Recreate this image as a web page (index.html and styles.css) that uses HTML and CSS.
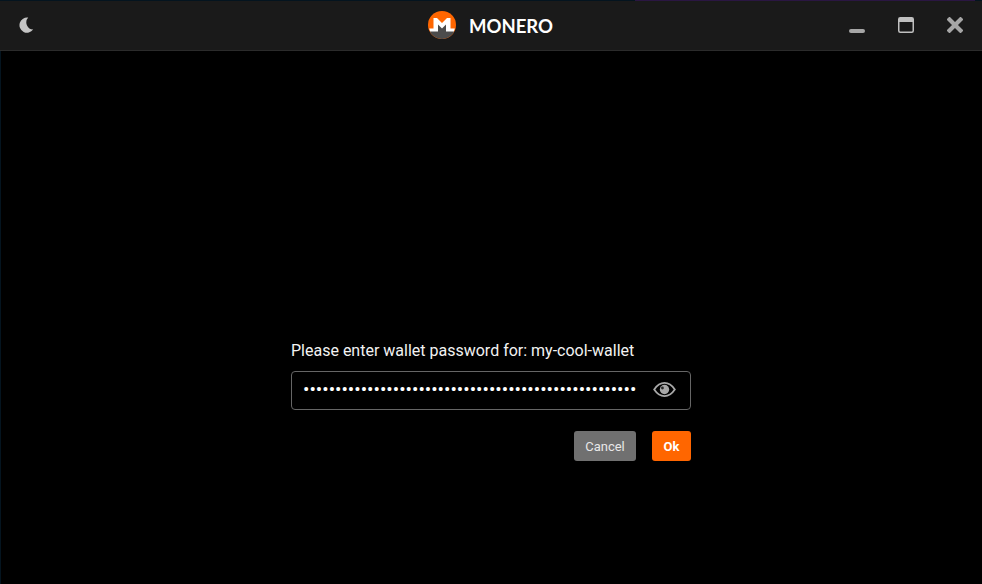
FILE: index.html
```html
<!DOCTYPE html>
<html lang="en">
  <head>
    <meta charset="UTF-8" />
    <meta name="viewport" content="width=device-width, initial-scale=1.0" />
    <title>Monero</title>
    <link rel="stylesheet" href="styles.css">
  </head>
  <body>
    <header class="titlebar">
      <button class="title-btn theme-btn" aria-label="Night mode">
        <svg width="16" height="16" viewBox="0 0 16 16"><path d="M10.2 .6A7.6 7.6 0 1 0 15.2 12.6 7.2 7.2 0 0 1 10.2 .6Z" fill="#c4c4c4"/></svg>
      </button>
      <div class="brand">
        <svg class="brand-logo" width="28" height="28" viewBox="0 0 28 28">
          <circle cx="14" cy="14" r="14" fill="#ff6600"/>
          <path d="M2.200 21.500A14 14 0 0 0 25.800 21.500L25.800 20H19V12H9V20H2.200Z" fill="#4c4c4c"/>
          <path d="M5.500 7H9L14 12 19 7H22.500V17.500H26.800L25.900 20.500H18V13.500L14 17.500 10 13.500V20.500H2.100L1.200 17.500H5.500Z" fill="#fff"/>
        </svg>
        <span class="brand-name">MONERO</span>
      </div>
      <div class="window-btns">
        <button class="title-btn min-btn" aria-label="Minimize">
          <svg width="16" height="4" viewBox="0 0 16 4"><rect width="16" height="4" rx="2" fill="#a6a6a6"/></svg>
        </button>
        <button class="title-btn" aria-label="Maximize">
          <svg width="16" height="16" viewBox="0 0 16 16"><rect x=".75" y=".75" width="14.5" height="14.5" rx="1.5" fill="none" stroke="#c0c0c0" stroke-width="1.5"/><rect x="1" y="1" width="14" height="4" fill="#c0c0c0"/></svg>
        </button>
        <button class="title-btn" aria-label="Close">
          <svg width="16" height="16" viewBox="0 0 16 16"><path d="M2.500 2.500 13.500 13.500M13.500 2.500 2.500 13.500" stroke="#a6a6a6" stroke-width="4.200" stroke-linecap="square"/></svg>
        </button>
      </div>
    </header>

    <main class="content">
      <form class="password-dialog">
        <label class="dialog-label" for="password">Please enter wallet password for: my-cool-wallet</label>
        <div class="password-field">
          <input id="password" type="password" value="passwordpasswordpasswordpasswordpasswordpasswordpass" />
          <svg class="eye" width="23" height="15" viewBox="0 0 24 16">
            <path d="M1 8C4 3.500 7.800 1 12 1S20 3.500 23 8C20 12.500 16.200 15 12 15S4 12.500 1 8Z" fill="none" stroke="#a8a8a8" stroke-width="1.900"/>
            <circle cx="12" cy="8" r="5" fill="#a8a8a8"/>
            <circle cx="9.800" cy="6.400" r="1.500" fill="#2a2a2a"/>
          </svg>
        </div>
        <div class="dialog-actions">
          <button type="button" class="btn btn-cancel">Cancel</button>
          <button type="button" class="btn btn-ok">Ok</button>
        </div>
      </form>
    </main>
  </body>
</html>
```

FILE: styles.css
```css
* {
  box-sizing: border-box;
}
html,
body {
  height: 100%;
}
body {
  margin: 0;
  display: flex;
  flex-direction: column;
  background-color: #000;
  color: #fff;
  font-family: Roboto, sans-serif;
  overflow: hidden;
}
.titlebar {
  height: 51px;
  flex: none;
  display: flex;
  align-items: center;
  justify-content: space-between;
  padding: 0 19px 1px 18px;
  position: relative;
  background-color: #1a1a1a;
  border-top: 1px solid #04141f;
  border-bottom: 1px solid #2b2b2b;
}
/* purple part of the top edge */
.titlebar::after {
  content: "";
  position: absolute;
  top: -1px;
  left: 635px;
  width: 340px;
  height: 1px;
  background-color: #2a1642;
}
.title-btn {
  padding: 0;
  border: none;
  background: none;
  display: flex;
  align-items: center;
  justify-content: center;
  cursor: pointer;
}
.min-btn {
  padding-top: 12px;
}
.brand {
  position: absolute;
  left: 428px;
  top: 10px;
  display: flex;
  align-items: center;
  gap: 13px;
}
.brand-name {
  font-family: Lato, sans-serif;
  font-weight: 700;
  font-size: 18.5px;
  padding-top: 2px;
  color: #fff;
}
.window-btns {
  display: flex;
  align-items: center;
  gap: 33px;
}
.content {
  flex: 1;
  display: flex;
  justify-content: center;
  padding-top: 290px;
  box-shadow: inset 1px 0 0 #04141f;
}
.password-dialog {
  width: 400px;
  display: flex;
  flex-direction: column;
}
.dialog-label {
  font-size: 16px;
  line-height: 19px;
  color: #f2f2f2;
  margin-bottom: 11px;
}
.password-field {
  height: 39px;
  display: flex;
  align-items: center;
  padding: 0 14px 2px 11px;
  border: 1px solid #666;
  border-radius: 4px;
}
.password-field input {
  flex: 1;
  min-width: 0;
  padding: 0;
  border: none;
  outline: none;
  background: none;
  color: #fff;
  font-family: Roboto, sans-serif;
  font-size: 19px;
}
.eye {
  flex: none;
  margin-left: 17px;
}
.dialog-actions {
  display: flex;
  justify-content: flex-end;
  gap: 16px;
  margin-top: 21px;
}
.btn {
  height: 30px;
  border: none;
  border-radius: 3px;
  font-family: Roboto, sans-serif;
  font-size: 13px;
  color: #fff;
  cursor: pointer;
}
.btn-cancel {
  width: 62px;
  background-color: #707070;
  color: #e8e8e8;
}
.btn-ok {
  width: 39px;
  background-color: #ff6600;
  font-weight: 700;
}
```
